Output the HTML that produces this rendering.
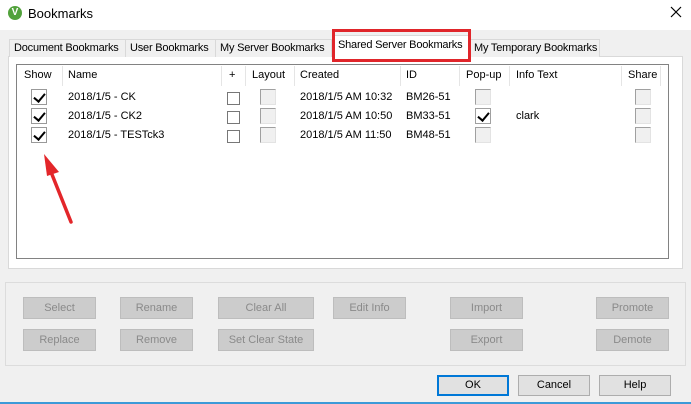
<!DOCTYPE html><html><head><style>
*{box-sizing:border-box}body{margin:0;width:691px;height:404px;background:#f0f0f0;font-family:"Liberation Sans",sans-serif;font-size:11px;color:#000;position:relative;overflow:hidden}
.a{position:absolute}
.tab{position:absolute;top:39px;height:18px;border:1px solid #d9d9d9;border-bottom:none;background:#f0f0f0;padding:2px 4px;white-space:nowrap;letter-spacing:-0.2px}
.cb{position:absolute;width:16px;height:16px;border:1px solid #999;background:#fff}
.gb{position:absolute;width:16px;height:16px;border:1px solid #a0a0a0;border-right-color:#e3e3e3;border-bottom-color:#e3e3e3;background:#f0f0f0}
.sm{position:absolute;width:13px;height:13px;border:1px solid #777;background:#fff}
.hd{position:absolute;top:69px}
.hs{position:absolute;top:66px;width:1px;height:20px;background:#e5e5e5}
.bt{position:absolute;height:22px;background:#ccc;border:1px solid #bdbdbd;color:#8a8a8a;text-align:center;line-height:20px}
.bk{position:absolute;top:375px;height:21px;background:#e1e1e1;border:1px solid #adadad;text-align:center;line-height:19px}
.ck::after{content:"";position:absolute;left:4px;top:1px;width:5px;height:9px;border:solid #000;border-width:0 2.5px 2.5px 0;transform:rotate(40deg)}
</style></head><body>
<div class="a" style="left:0;top:0;width:691px;height:30px;background:#fff"></div>
<div class="a" style="left:8px;top:6px;width:14px;height:14px;border-radius:50%;background:#52a23c;color:#fff;font-size:10px;font-weight:bold;text-align:center;line-height:14px">V</div>
<div class="a" style="left:28px;top:6px;font-size:13px">Bookmarks</div>
<svg class="a" style="left:670px;top:6px" width="12" height="12"><path d="M1 1L11 11M11 1L1 11" stroke="#000" stroke-width="1.2"/></svg>
<div class="a" style="left:8px;top:56px;width:675px;height:213px;background:#fff;border:1px solid #d9d9d9"></div>
<div class="tab" style="left:9px;width:117px">Document Bookmarks</div>
<div class="tab" style="left:125px;width:91px">User Bookmarks</div>
<div class="tab" style="left:215px;width:117px">My Server Bookmarks</div>
<div class="tab" style="left:333px;top:35px;height:22px;width:136px;background:#fff;padding-top:3px">Shared Server Bookmarks</div>
<div class="tab" style="left:469px;width:131px">My Temporary Bookmarks</div>
<div class="a" style="left:332px;top:29px;width:139px;height:33px;border:3px solid #e0252a"></div>
<div class="a" style="left:16px;top:64px;width:653px;height:195px;border:1px solid #828282;background:#fff"></div>
<div class="hd" style="left:24px">Show</div><div class="hs" style="left:62px"></div>
<div class="hd" style="left:68px">Name</div><div class="hs" style="left:221px"></div>
<div class="hd" style="left:229px">+</div><div class="hs" style="left:245px"></div>
<div class="hd" style="left:252px">Layout</div><div class="hs" style="left:294px"></div>
<div class="hd" style="left:300px">Created</div><div class="hs" style="left:400px"></div>
<div class="hd" style="left:406px">ID</div><div class="hs" style="left:459px"></div>
<div class="hd" style="left:466px">Pop-up</div><div class="hs" style="left:509px"></div>
<div class="hd" style="left:516px">Info Text</div><div class="hs" style="left:621px"></div>
<div class="hd" style="left:628px">Share</div><div class="hs" style="left:660px"></div>
<div class="cb ck" style="left:31px;top:89px"></div><div class="cb ck" style="left:31px;top:108px"></div><div class="cb ck" style="left:31px;top:127px"></div>
<div class="a" style="left:68px;top:88px;line-height:19px">2018/1/5 - CK<br>2018/1/5 - CK2<br>2018/1/5 - TESTck3</div>
<div class="sm" style="left:227px;top:92px"></div><div class="sm" style="left:227px;top:111px"></div><div class="sm" style="left:227px;top:130px"></div>
<div class="gb" style="left:260px;top:89px"></div><div class="gb" style="left:260px;top:108px"></div><div class="gb" style="left:260px;top:127px"></div>
<div class="a" style="left:300px;top:88px;line-height:19px">2018/1/5 AM 10:32<br>2018/1/5 AM 10:50<br>2018/1/5 AM 11:50</div>
<div class="a" style="left:406px;top:88px;line-height:19px">BM26-51<br>BM33-51<br>BM48-51</div>
<div class="gb" style="left:475px;top:89px"></div><div class="cb ck" style="left:475px;top:108px;border-color:#a0a0a0"></div><div class="gb" style="left:475px;top:127px"></div>
<div class="a" style="left:516px;top:107px;line-height:19px">clark</div>
<div class="gb" style="left:635px;top:89px"></div><div class="gb" style="left:635px;top:108px"></div><div class="gb" style="left:635px;top:127px"></div>
<svg class="a" style="left:0;top:0" width="691" height="404"><line x1="71" y1="222" x2="51" y2="172" stroke="#e3262a" stroke-width="3.5" stroke-linecap="round"/><polygon points="44,154 59,172 47,176" fill="#e3262a"/></svg>
<div class="a" style="left:5px;top:282px;width:681px;height:84px;border:1px solid #dcdcdc"></div>
<div class="bt" style="left:23px;top:297px;width:73px">Select</div>
<div class="bt" style="left:120px;top:297px;width:73px">Rename</div>
<div class="bt" style="left:218px;top:297px;width:96px">Clear All</div>
<div class="bt" style="left:333px;top:297px;width:73px">Edit Info</div>
<div class="bt" style="left:450px;top:297px;width:73px">Import</div>
<div class="bt" style="left:596px;top:297px;width:73px">Promote</div>
<div class="bt" style="left:23px;top:329px;width:73px">Replace</div>
<div class="bt" style="left:120px;top:329px;width:73px">Remove</div>
<div class="bt" style="left:218px;top:329px;width:96px">Set Clear State</div>
<div class="bt" style="left:450px;top:329px;width:73px">Export</div>
<div class="bt" style="left:596px;top:329px;width:73px">Demote</div>
<div class="bk" style="left:437px;width:72px;border:2px solid #0078d7;line-height:17px">OK</div>
<div class="bk" style="left:518px;width:72px">Cancel</div>
<div class="bk" style="left:599px;width:72px">Help</div>
<div class="a" style="left:0;top:402px;width:691px;height:2px;background:#3c9ad8"></div>
</body></html>
